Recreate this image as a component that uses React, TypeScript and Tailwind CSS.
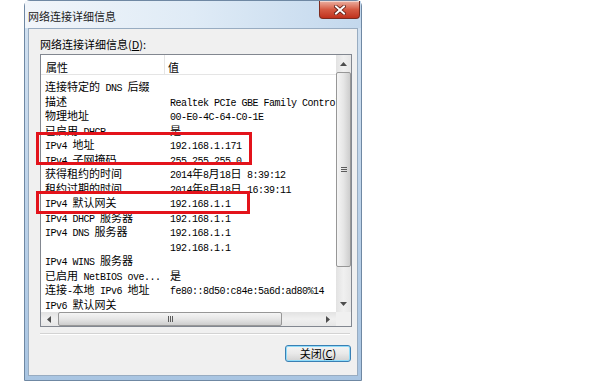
import React from 'react'

const rows: Array<[string, string]> = [
  ['连接特定的 DNS 后缀', ''],
  ['描述', 'Realtek PCIe GBE Family Controller'],
  ['物理地址', '00-E0-4C-64-C0-1E'],
  ['已启用 DHCP', '是'],
  ['IPv4 地址', '192.168.1.171'],
  ['IPv4 子网掩码', '255.255.255.0'],
  ['获得租约的时间', '2014年8月18日 8:39:12'],
  ['租约过期的时间', '2014年8月18日 16:39:11'],
  ['IPv4 默认网关', '192.168.1.1'],
  ['IPv4 DHCP 服务器', '192.168.1.1'],
  ['IPv4 DNS 服务器', '192.168.1.1'],
  ['', '192.168.1.1'],
  ['IPv4 WINS 服务器', ''],
  ['已启用 NetBIOS ove...', '是'],
  ['连接-本地 IPv6 地址', 'fe80::8d50:c84e:5a6d:ad80%14'],
  ['IPv6 默认网关', ''],
]

// SimSun style: wide CJK glyphs, narrow fixed-width latin
const Mixed = ({ text }: { text: string }) => (
  <>
    {text.split(/([\u3400-\u9fff]+)/).map((part, i) =>
      /[\u3400-\u9fff]/.test(part) ? (
        <span key={i} className="font-['Noto_Sans_CJK_SC',sans-serif] text-[11px]">
          {part}
        </span>
      ) : (
        <span key={i} className="font-['Liberation_Mono','Noto_Sans_CJK_SC',monospace] text-[10px] tracking-[-0.5px]">
          {part}
        </span>
      )
    )}
  </>
)

const Arrow = ({ dir }: { dir: 'up' | 'down' | 'left' | 'right' }) => {
  const pts = {
    up: '0,4 3.5,0 7,4',
    down: '0,0 3.5,4 7,0',
    left: '4,0 0,3.5 4,7',
    right: '0,0 4,3.5 0,7',
  }[dir]
  const vertical = dir === 'up' || dir === 'down'
  return (
    <svg width={vertical ? 7 : 4} height={vertical ? 4 : 7} viewBox={vertical ? '0 0 7 4' : '0 0 4 7'}>
      <polygon points={pts} fill="#4d4d4d" />
    </svg>
  )
}

const VScroll = () => (
  <div className="flex w-[15px] flex-col bg-gradient-to-r from-[#e2e2e2] via-[#f0f0f0] to-[#e6e6e6]">
    <div className="flex h-[17px] items-center justify-center">
      <Arrow dir="up" />
    </div>
    <div className="flex h-[195px] flex-col items-center justify-center rounded-[2px] border border-[#979797] bg-gradient-to-r from-[#f5f5f5] via-[#e6e6e6] to-[#cdcdcd]">
      <div className="flex flex-col gap-[1px]">
        <div className="h-[1px] w-[6px] bg-[#5b5b5b]" />
        <div className="h-[1px] w-[6px] bg-[#5b5b5b]" />
        <div className="h-[1px] w-[6px] bg-[#5b5b5b]" />
      </div>
    </div>
    <div className="flex-1" />
    <div className="flex h-[17px] items-center justify-center">
      <Arrow dir="down" />
    </div>
  </div>
)

const HScroll = () => (
  <div className="flex h-[14px] flex-1 bg-gradient-to-b from-[#e2e2e2] via-[#f0f0f0] to-[#e6e6e6]">
    <div className="flex w-[16px] items-center justify-center">
      <Arrow dir="left" />
    </div>
    <div className="ml-[1px] flex w-[224px] items-center justify-center gap-[1px] rounded-[2px] border border-[#979797] bg-gradient-to-b from-[#f5f5f5] via-[#e6e6e6] to-[#cdcdcd]">
      <div className="h-[6px] w-[1px] bg-[#5b5b5b]" />
      <div className="h-[6px] w-[1px] bg-[#5b5b5b]" />
      <div className="h-[6px] w-[1px] bg-[#5b5b5b]" />
    </div>
    <div className="flex-1" />
    <div className="flex w-[16px] items-center justify-center">
      <Arrow dir="right" />
    </div>
  </div>
)

const App = () => {
  return (
    <div className="relative h-[381px] w-[600px] overflow-hidden bg-white text-black">
      <div className="ml-[24px] flex h-[381px] w-[338px] flex-col rounded-t-[6px] border border-[#6f88a3] bg-gradient-to-b from-[#d3e2f1] to-[#a9c5e2]">
        {/* title bar */}
        <div className="flex h-[27px] bg-gradient-to-r from-[#f1f5fa] via-[#dfebf6] to-[#c3d8ed]">
          <div className="pl-[3px] pt-[7px] font-['Noto_Sans_CJK_SC',sans-serif] text-[11px] leading-[16px] text-[#1b1b1b]">
            网络连接详细信息
          </div>
          <div className="ml-auto mr-[1px] flex h-[18px] w-[41px] items-center justify-center rounded-b-[4px] border border-t-0 border-[#7d2b1f] bg-gradient-to-b from-[#eab0a2] via-[#d55a43] to-[#c0301c] shadow-[inset_0_1px_0_rgba(255,255,255,0.5)]">
            <svg width="12" height="10" viewBox="0 0 12 10">
              <path d="M2 1.5 L10 8.5 M10 1.5 L2 8.5" stroke="#5a1a12" strokeWidth="3.6" strokeLinecap="square" />
              <path d="M2 1.5 L10 8.5 M10 1.5 L2 8.5" stroke="#ffffff" strokeWidth="2" strokeLinecap="square" />
            </svg>
          </div>
        </div>

        {/* client area */}
        <div className="mx-[3px] flex h-[348px] flex-col border border-[#98acc1] bg-[#f0f0f0] pl-[11px] pr-[5px]">
          <div className="pt-[8px] font-['Noto_Sans_CJK_SC',sans-serif] text-[11px] leading-[14px]">
            网络连接详细信息(<span className="underline">D</span>):
          </div>

          <div className="mt-[3px] flex h-[273px] flex-col border border-[#828790] bg-white">
            <div className="flex h-[257px]">
              <div className="flex flex-1 flex-col overflow-hidden">
                <div className="flex h-[20px] shrink-0 border-b border-[#e5e5e5] font-['Noto_Sans_CJK_SC',sans-serif] text-[11px] leading-[20px]">
                  <div className="w-[124px] border-r border-[#e5e5e5] pl-[5px] pt-[2px]">属性</div>
                  <div className="pl-[3px] pt-[2px]">值</div>
                </div>
                <div className="pt-[5px]">
                  {rows.map(([prop, value], i) => (
                    <div key={i} className="flex h-[14.5px] items-center whitespace-nowrap leading-[14.5px]">
                      <div className="w-[129px] shrink-0 pl-[4px]">
                        <Mixed text={prop} />
                      </div>
                      <div>
                        <Mixed text={value} />
                      </div>
                    </div>
                  ))}
                </div>
              </div>
              <VScroll />
            </div>
            <div className="flex h-[14px]">
              <HScroll />
              <div className="w-[15px] bg-[#f0f0f0]" />
            </div>
          </div>

          <div className="mr-[2px] mt-[6px] h-[2px] border-t border-[#d3d3d3] bg-white" />

          <button className="mr-[1px] mt-[10px] flex h-[17px] w-[66px] items-center justify-center self-end rounded-[3px] border border-[#3a7fb3] bg-gradient-to-b from-[#f4f4f4] via-[#e9e9e9] to-[#d2d2d2] font-['Noto_Sans_CJK_SC',sans-serif] text-[11px] leading-[13px] shadow-[inset_0_0_0_1px_#8fdcfa]">
            关闭(<span className="underline">C</span>)
          </button>
        </div>
      </div>

      {/* red highlight boxes */}
      <div className="absolute left-[36px] top-[132px] h-[33px] w-[216px] border-[3px] border-[#e3131b]" />
      <div className="absolute left-[36px] top-[191px] h-[23px] w-[214px] border-[3px] border-[#e3131b]" />
    </div>
  )
}

export default App
